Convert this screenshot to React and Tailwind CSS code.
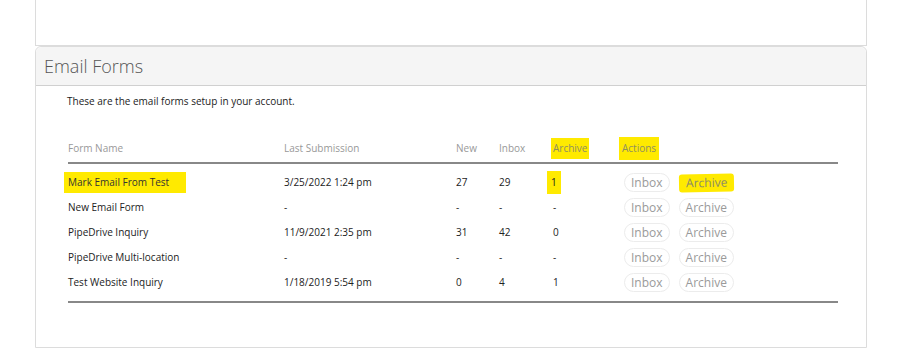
const forms = [
  { name: "Mark Email From Test", last: "3/25/2022 1:24 pm", newCount: "27", inbox: "29", archive: "1", marked: true },
  { name: "New Email Form", last: "-", newCount: "-", inbox: "-", archive: "-" },
  { name: "PipeDrive Inquiry", last: "11/9/2021 2:35 pm", newCount: "31", inbox: "42", archive: "0" },
  { name: "PipeDrive Multi-location", last: "-", newCount: "-", inbox: "-", archive: "-" },
  { name: "Test Website Inquiry", last: "1/18/2019 5:54 pm", newCount: "0", inbox: "4", archive: "1" },
];

const cols = "grid grid-cols-[216px_172px_43px_54px_69px_1fr] items-center";

function Pill({ children, marked }) {
  return (
    <span
      className={
        marked
          ? "inline-flex h-[18px] items-center rounded-[3px] bg-[#ffea00] px-[7px] text-[12px] leading-none text-[#8a8a6a] -rotate-1"
          : "inline-flex h-[19px] items-center rounded-full border border-[#ececec] px-[6px] text-[12px] leading-none text-[#9a9a9a]"
      }
    >
      {children}
    </span>
  );
}

export default function App() {
  return (
    <div className="min-h-[361px] bg-white font-['Open_Sans',sans-serif]">
      <div className="ml-[35px] h-[46px] w-[832px] border-x border-b border-[#dcdcdc]" />

      <section className="ml-[35px] w-[832px] rounded-t-[6px] border border-[#dcdcdc]">
        <div className="flex h-[39px] items-center rounded-t-[6px] border-b border-[#d0d0d0] bg-[#f5f5f5] pl-[8px]">
          <h2 className="text-[18px] font-light text-[#555]">Email Forms</h2>
        </div>

        <div className="pb-[44px] pl-[31px] pr-[29px] pt-[8px]">
          <p className="text-[10px] leading-[14px] text-[#222]">
            These are the email forms setup in your account.
          </p>

          <div className="ml-px mt-[27px] w-[770px]">
            <div className={`${cols} h-[29px] border-b-2 border-[#888] text-[10px] text-[#999]`}>
              <span>Form Name</span>
              <span>Last Submission</span>
              <span>New</span>
              <span>Inbox</span>
              <span>
                <span className="-ml-[2px] inline-block bg-[#ffea00] px-[2px] py-[3px] text-[#8f8f60]">Archive</span>
              </span>
              <span>
                <span className="-ml-[3px] inline-block bg-[#ffea00] px-[3px] py-[4px] text-[#8f8f60]">Actions</span>
              </span>
            </div>

            <div className="border-b-2 border-[#888] pb-[6px] pt-[6px]">
              {forms.map((f) => (
                <div key={f.name} className={`${cols} h-[25px] text-[10px] text-[#222]`}>
                  <span>
                    {f.marked ? (
                      <span className="-ml-[4px] inline-block bg-[#ffea00] py-[3px] pl-[4px] pr-[17px] text-[#333]">
                        {f.name}
                      </span>
                    ) : (
                      f.name
                    )}
                  </span>
                  <span>{f.last}</span>
                  <span>{f.newCount}</span>
                  <span>{f.inbox}</span>
                  <span>
                    {f.marked ? (
                      <span className="-ml-[6px] inline-block bg-[#ffea00] px-[4px] py-[4px]">{f.archive}</span>
                    ) : (
                      f.archive
                    )}
                  </span>
                  <span className="flex items-center gap-[9px] pl-[2px]">
                    <Pill>Inbox</Pill>
                    <Pill marked={f.marked}>Archive</Pill>
                  </span>
                </div>
              ))}
            </div>
          </div>
        </div>
      </section>
    </div>
  );
}
